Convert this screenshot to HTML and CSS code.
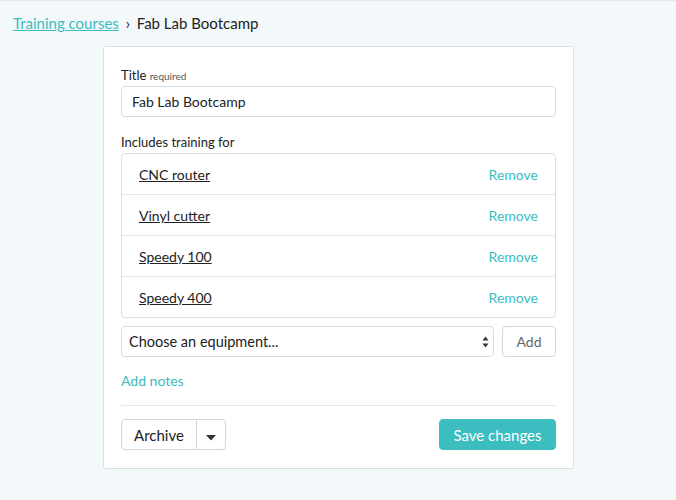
FILE: index.html
```html
<!DOCTYPE html>
<html lang="en">
<head>
    <meta charset="UTF-8">
    <meta name="viewport" content="width=device-width, initial-scale=1.0">
    <title>Fab Lab Bootcamp</title>
    <link rel="stylesheet" href="styles.css">
</head>
<body>
    <div class="breadcrumb">
        <a href="#">Training courses</a>
        <span class="sep">›</span>
        <span>Fab Lab Bootcamp</span>
    </div>

    <div class="card">
        <form>
            <label class="field-label" for="title">Title <small>required</small></label>
            <input type="text" id="title" class="input" value="Fab Lab Bootcamp">

            <div class="field-label">Includes training for</div>
            <ul class="list">
                <li><a href="#" class="item">CNC router</a><a href="#" class="remove">Remove</a></li>
                <li><a href="#" class="item">Vinyl cutter</a><a href="#" class="remove">Remove</a></li>
                <li><a href="#" class="item">Speedy 100</a><a href="#" class="remove">Remove</a></li>
                <li><a href="#" class="item">Speedy 400</a><a href="#" class="remove">Remove</a></li>
            </ul>

            <div class="add-row">
                <div class="select">
                    <span>Choose an equipment...</span>
                    <svg width="7" height="12" viewBox="0 0 7 12"><path d="M3.5 0.5L6.5 4.5H0.5Z M3.5 11.5L0.5 7.5H6.5Z" fill="#333"/></svg>
                </div>
                <button type="button" class="btn btn-add">Add</button>
            </div>

            <a href="#" class="notes">Add notes</a>

            <div class="footer">
                <div class="btn-group">
                    <button type="button" class="btn">Archive</button>
                    <button type="button" class="btn caret-btn">
                        <svg width="10" height="6" viewBox="0 0 10 6"><path d="M0 0H10L5 5.5Z" fill="#333"/></svg>
                    </button>
                </div>
                <button type="button" class="btn btn-primary">Save changes</button>
            </div>
        </form>
    </div>
</body>
</html>
```

FILE: styles.css
```css
body {
    font-family: Lato, "Noto Sans", sans-serif;
    background-color: #f3f8fa;
    color: #222;
    margin: 0;
    border-top: 1px solid #e3e7e9;
    font-size: 14px;
}
a {
    color: #3cbcbf;
    text-decoration: none;
}
.breadcrumb {
    padding: 13px 13px 0;
    font-size: 15px;
    height: 19px;
}
.breadcrumb a {
    text-decoration: underline;
}
.breadcrumb .sep {
    margin: 0 3px;
}
.card {
    width: 435px;
    margin: 13px 0 0 103px;
    background-color: white;
    border: 1px solid #dcdfe1;
    border-radius: 3px;
    padding: 20px 17px 18px;
}
.field-label {
    display: block;
    font-size: 13px;
    margin-bottom: 2px;
    line-height: 16px;
}
.field-label small {
    font-size: 10px;
    color: #555;
}
.input {
    box-sizing: border-box;
    width: 100%;
    height: 31px;
    border: 1px solid #d9dcde;
    border-radius: 4px;
    padding: 0 10px;
    font-family: inherit;
    font-size: 14px;
    color: #222;
    margin-bottom: 17px;
}
.list {
    list-style: none;
    margin: 3px 0 0;
    padding: 0;
    border: 1px solid #dcdfe1;
    border-radius: 4px;
}
.list li {
    display: flex;
    justify-content: space-between;
    align-items: center;
    height: 40px;
    padding: 0 17px;
    border-top: 1px solid #e3e6e8;
}
.list li:first-child {
    border-top: none;
}
.list .item {
    color: #222;
    text-decoration: underline;
}
.add-row {
    display: flex;
    gap: 8px;
    margin-top: 8px;
}
.select {
    flex: 1;
    display: flex;
    justify-content: space-between;
    align-items: center;
    height: 29px;
    border: 1px solid #d9dcde;
    border-radius: 4px;
    padding: 0 4px 0 7px;
    font-size: 14.5px;
}
.btn {
    font-family: inherit;
    font-size: 14px;
    background-color: white;
    color: #222;
    border: 1px solid #d4d7d9;
    border-radius: 4px;
    height: 31px;
    padding: 0 14px;
    cursor: pointer;
}
.btn-add {
    width: 54px;
    padding: 0;
    color: #666;
}
.notes {
    display: block;
    margin-top: 15px;
    padding-bottom: 16px;
    border-bottom: 1px solid #e5e7e8;
}
.footer {
    display: flex;
    justify-content: space-between;
    margin-top: 13px;
}
.btn-group {
    display: flex;
}
.btn-group .btn {
    font-size: 15px;
    border-radius: 4px 0 0 4px;
    width: 76px;
    padding: 0;
}
.btn-group .caret-btn {
    border-left: none;
    border-radius: 0 4px 4px 0;
    width: 29px;
}
.btn-primary {
    background-color: #3cbdbf;
    border-color: #3cbdbf;
    color: white;
    font-size: 15px;
    width: 117px;
    padding: 0;
}
```
